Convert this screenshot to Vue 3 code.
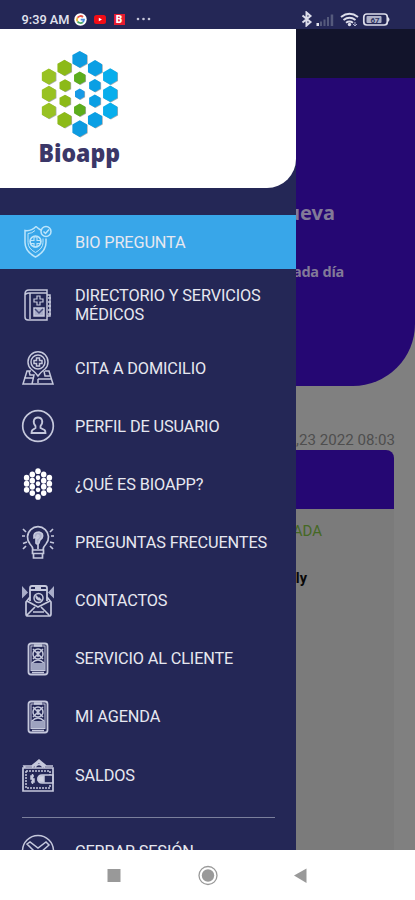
<script setup>
const hex = (x, y, r) => {
  const w = r * 0.87
  return `${x},${y - r} ${x + w},${y - r / 2} ${x + w},${y + r / 2} ${x},${y + r} ${x - w},${y + r / 2} ${x - w},${y - r / 2}`
}
const cells = [
  [11.8, 26.5, 8, '#98c222'], [11.8, 43.8, 8, '#98c222'], [11.8, 60.8, 8, '#98c222'],
  [27.4, 17.8, 8, '#8cba18'], [28, 35.5, 6.3, '#8cba18'], [28, 51, 6.3, '#8cba18'], [27.4, 70, 8, '#8cba18'],
  [42.7, 9.3, 8.4, '#0d9be0'], [42.7, 28, 6.5, '#5cad1c'], [42.7, 44, 5.4, '#1699e6'], [42.7, 60, 6.5, '#5cad1c'], [42.7, 78.6, 8.4, '#0d9be0'],
  [58, 18.2, 8.1, '#0a9fe4'], [57.8, 35.5, 6.5, '#0a9fe4'], [57.8, 51, 6.5, '#0a9fe4'], [58, 70, 8.1, '#0a9fe4'],
  [73.2, 26.5, 8.2, '#08aeec'], [73.2, 43.8, 8.2, '#08aeec'], [73.2, 60.8, 8.2, '#08aeec'],
]
const dots = [
  [6, 11], [6, 17], [6, 23], [12, 7.8], [12, 14], [12, 20], [12, 26.2],
  [18, 4.5], [18, 11], [18, 17], [18, 23], [18, 30],
  [24, 7.8], [24, 14], [24, 20], [24, 26.2], [30, 11], [30, 17], [30, 23],
]
const items = [
  { icon: 'shield', label: 'BIO PREGUNTA' },
  { icon: 'book', label: 'DIRECTORIO Y SERVICIOS MÉDICOS' },
  { icon: 'map', label: 'CITA A DOMICILIO' },
  { icon: 'user', label: 'PERFIL DE USUARIO' },
  { icon: 'dots', label: '¿QUÉ ES BIOAPP?' },
  { icon: 'bulb', label: 'PREGUNTAS FRECUENTES' },
  { icon: 'mail', label: 'CONTACTOS' },
  { icon: 'phone', label: 'SERVICIO AL CLIENTE' },
  { icon: 'phone', label: 'MI AGENDA' },
  { icon: 'wallet', label: 'SALDOS' },
]
</script>

<template>
  <div class="screen">
    <header class="status">
      <span class="clock">9:39 AM</span>
      <svg class="google" width="13" height="13" viewBox="0 0 13 13">
        <circle cx="6.5" cy="6.5" r="6.2" fill="#fff" />
        <g fill="none" stroke-width="1.8">
          <path d="M9 4A3.6 3.6 0 0 0 3.5 4.7" stroke="#e75546" />
          <path d="M3.5 4.7A3.6 3.6 0 0 0 3.5 8.4" stroke="#efbd38" />
          <path d="M3.5 8.4A3.6 3.6 0 0 0 8.8 9.2" stroke="#4aa865" />
          <path d="M8.8 9.2A3.6 3.6 0 0 0 10 6.6H6.7" stroke="#4789dc" />
        </g>
      </svg>
      <svg class="tube" width="12" height="9" viewBox="0 0 12 9"><rect width="12" height="9" rx="2.5" fill="#f20d16" /><path d="M4.8 2.7 8 4.5 4.8 6.3z" fill="#fff" /></svg>
      <span class="bee">B</span>
      <svg class="more" width="15" height="4" viewBox="0 0 15 4" fill="#c4c5d8"><circle cx="2" cy="2" r="1.3" /><circle cx="7.5" cy="2" r="1.3" /><circle cx="13" cy="2" r="1.3" /></svg>
      <svg class="signals" width="91" height="16" viewBox="0 0 91 16">
        <path d="M1.500 4.500 9.500 11 5.500 14.500V1.500l4 3.500L1.500 11.500" fill="none" stroke="#dcddea" stroke-width="2" />
        <g fill="#555a7c"><path d="M15.500 12h2.500v3h-2.500z" fill="#e5e6ee" /><path d="M19 10.500h2V15h-2zM22.500 8.500h2V15h-2zM26 6h2v9h-2zM29.700 3.500h2.500V15h-2.500z" /></g>
        <g fill="none" stroke="#dcddea" stroke-width="2"><path d="M40 6q8.500-6.500 17 0M42.500 9q6-4.500 12 0M45 11.800q3.500-2.500 7 0" /></g>
        <circle cx="48.500" cy="13.500" r="1.700" fill="#dcddea" /><path d="M54 11v4m-2-2 2 2 2-2" stroke="#aeb2ce" fill="none" />
        <rect x="62.800" y="3" width="23.500" height="11" rx="3" fill="none" stroke="#dcddea" stroke-width="1.700" />
        <rect x="65.500" y="5" width="15" height="7" rx="1" fill="#aeb1c8" /><path d="M87 6q3 2.500 0 5z" fill="#dcddea" />
        <text x="69.500" y="11.700" class="charge">67</text>
      </svg>
    </header>

    <main class="stage">
      <section class="page">
        <div class="topbar"></div>
        <div class="banner">
          <p class="headline">ueva</p>
          <p class="sub">ada día</p>
        </div>
        <p class="date">,23 2022 08:03</p>
        <article class="card">
          <div class="card-head"></div>
          <p class="state">ADA</p>
          <p class="name">ly</p>
        </article>
      </section>

      <aside class="drawer">
        <div class="brand">
          <svg width="90" height="120" viewBox="0 0 90 120">
            <g v-for="(c, i) in cells" :key="i">
              <polygon :points="hex(c[0] + 0.7, c[1] + 0.5, c[2])" fill="#a7abb0" />
              <polygon :points="hex(c[0], c[1], c[2])" :fill="c[3]" />
            </g>
            <text class="wordmark" x="1.500" y="111.500" textLength="81.500" lengthAdjust="spacingAndGlyphs">Bioapp</text>
          </svg>
        </div>
        <nav class="menu">
          <a v-for="(item, i) in items" :key="item.label" class="item" :class="{ active: i === 0, double: i === 1 }">
            <svg class="icon" width="36" height="36" viewBox="0 0 36 36">
              <g v-if="item.icon === 'shield'" transform="translate(-2 -.5)">
                <path d="M18 3q-5 5-11 4v12q0 9 10.500 14.500Q28 28 28 19v-4M18 3q3 3 6 4" /><path d="M17 7q-3 3-7 3v9q0 6 7.500 10Q25 25 25 19v-4" stroke-width="1" />
                <circle cx="17.500" cy="18" r="5.500" /><path d="M16 13.500h3V17h3.500v3H19v3.500h-3V20h-3.500v-3H16z" stroke-width="1.100" />
                <circle cx="28" cy="8" r="5" /><path d="m25.500 8 2 2 3.500-4" />
              </g>
              <g v-else-if="item.icon === 'book'" transform="translate(-1 0)">
                <path d="M6 7q0-4 4-4h18v30H9q-3 0-3-3zM6 8q1-2 4-2h18M11 6v26M28 8h3v21h-3M29 11h3m-3 4h3m-3 4h3m-3 4h3m-3 4h3" />
                <path d="M18 9h3v3h3v3h-3v3h-3v-3h-3v-3h3z" stroke-width="1.200" />
                <path d="M15 21h10v8H15z" fill="#a9adc9" /><path d="m16 22 4 4 4-4" stroke="#454a79" />
              </g>
              <g v-else-if="item.icon === 'map'">
                <path d="M18 26q-3-4-7-7a10 10 0 1 1 14 0q-4 3-7 7z" /><circle cx="18" cy="12" r="7" />
                <path d="M16.500 8h3v2.500H22v3h-2.500V16h-3v-2.500H14v-3h2.500z" />
                <path d="M11 21H7L3 34h30l-4-13h-4M9 21l1 4h4l-2 9M4 28h9m11-7 1 5h5m-12 3h14M18 29v4" />
              </g>
              <g v-else-if="item.icon === 'user'">
                <circle cx="18" cy="18" r="15.300" stroke-width="1.700" />
                <path d="M15.500 18q-2.500-3-1.500-6 1-2.500 4-2.500t4 2.500q1 3-1.500 6v2l4 2q1 1 1 3h-14q0-2 1-3l3-2z" stroke-width="1.800" />
              </g>
              <g v-else-if="item.icon === 'dots'" fill="#fff" stroke="none" transform="translate(.9 .6) scale(.95 1.010)">
                <circle v-for="(d, k) in dots" :key="k" :cx="d[0]" :cy="d[1]" :r="d[0] === 18 && d[1] > 5 && d[1] < 29 ? 2.400 : 2.900" />
              </g>
              <g v-else-if="item.icon === 'bulb'" stroke-width="1.700">
                <path d="M13 26q0-3-3-6a10.500 10.500 0 1 1 16 0q-3 3-3 6zM12.500 26h11v3.500h-11zm1 3.500h9V34h-9zM7 18l-4 1.500M6 8 3 5m3 17-3 3M30 18l4 1M30 8l3-3m-3 17 3 3M5 12H2m32 0h-3" />
                <path d="M14 14q-1-6 5-6 5 1 3 6-3 2-3 5-2 2-3 0v-4q3-1 3-3-2-2-2 1z" fill="#a9adc9" /><path d="M18 20v5" />
              </g>
              <g v-else-if="item.icon === 'mail'">
                <path d="M10 18V5q0-2 2-2h13q2 0 2 2v13M10 7h17M15 5h6" stroke-width="1.800" />
                <circle cx="18.500" cy="15" r="4.500" /><path d="M16 13q0 4 5 4l-2-2-1 1-1-2z" />
                <path d="m10 14-4 5v12q0 2 2 2h21q2 0 2-2V19l-4-5M7 18l11 6 12-6M7 32l8-8m14 8-8-8M13 29h11" stroke-width="1.700" />
                <path d="m2 3 6 6.500-6 6zm32 0-6 6.500 6 6z" fill="#a9adc9" stroke="none" />
              </g>
              <g v-else-if="item.icon === 'phone'">
                <rect x="8.500" y="2.500" width="19" height="31" rx="2.500" stroke-width="1.800" /><rect x="11" y="5" width="14" height="24.500" stroke-width="1" /><path d="M14 4.500h8" stroke-width="2.500" />
                <circle cx="18" cy="13" r="5" /><path d="m13 8 10 10m0-10L13 18M18 10v6m-6 6q6-6 12 0v6H12z" /><path d="M11.500 22h13v7h-13z" fill="#9da2bf" stroke="none" /><path d="M12 31.500h12" />
              </g>
              <g v-else>
                <path d="M3 11h30v23H3zM5 11l-1-2h8l7-6 7 6h7M12 10l7-5 6 5M15 10q4-5 8 0" stroke-width="1.700" />
                <path d="M6 14h24v4M6 14v17h24v-4" stroke-dasharray="2 1" />
                <path d="M14 19h-3v3h3v3h-3m1.500-8v10" />
                <path d="M33 18H22q-4 0-4 4t4 4h11z" /><path d="M24 19h-3q-3 0-3 3t3 3h3z" fill="#d0d2e2" />
              </g>
            </svg>
            <span>{{ item.label }}</span>
          </a>
          <hr class="rule" />
          <a class="item exit">
            <svg class="icon" width="36" height="36" viewBox="0 0 36 36"><circle cx="18" cy="18" r="15.500" /><path d="m7 11 3-2 8 6 8-6 3 3-9 8 8 8-3 3-7-8-7 8-3-3 8-8z" /></svg>
            <span>CERRAR SESIÓN</span>
          </a>
        </nav>
      </aside>
    </main>

    <footer class="keys">
      <svg width="415" height="50" viewBox="0 0 415 50">
        <rect x="107.500" y="19" width="13" height="13" fill="#999" />
        <circle cx="208" cy="25.500" r="9" fill="none" stroke="#999" stroke-width="1.300" /><circle cx="208" cy="25.500" r="6.200" fill="#999" />
        <path d="M294 25.500 306.500 18.500v14.500z" fill="#999" />
      </svg>
    </footer>
  </div>
</template>

<style>
body { margin: 0; }
</style>
<style scoped>
.screen { width: 415px; height: 900px; display: flex; flex-direction: column; overflow: hidden; background: #fff; font-family: Roboto, sans-serif; }
p { margin: 0; }
svg { display: block; flex: none; }
.status { height: 29px; flex: none; box-sizing: border-box; padding: 9px 0 0 21.5px; display: flex; align-items: center; background: #242756; color: #e2e3ef; }
.clock { width: 52px; font-size: 12.8px; line-height: 19px; font-weight: 500; letter-spacing: 0; white-space: nowrap; }
.google { margin-right: 7px; }
.tube { margin-right: 8px; }
.bee { width: 11px; height: 11px; background: #e51c30; color: #fff; font-size: 10px; line-height: 11px; font-weight: 900; text-align: center; }
.more { margin: 0 150px 0 11px; }
.charge { font-size: 8px; font-weight: 700; fill: #303461; }
.stage { height: 821px; flex: none; display: grid; grid-template-columns: 415px; grid-template-rows: 821px; overflow: hidden; }
.page, .drawer { grid-area: 1 / 1; }
.page { background: #808080; }
.topbar { height: 49px; background: #12142b; }
.banner { height: 308px; box-sizing: border-box; padding-top: 122px; border-bottom-right-radius: 62px; background: #250773; color: #827a98; font-family: "Noto Sans", sans-serif; font-weight: 700; }
.headline { width: 335px; text-align: right; font-size: 20px; line-height: 26px; }
.sub { width: 344px; margin-top: 34px; text-align: right; font-size: 14.5px; line-height: 22px; letter-spacing: -0.2px; }
.date { width: 395px; margin-top: 44px; text-align: right; font-size: 15.1px; line-height: 20px; color: #4e4e4e; }
.card { width: 394px; height: 450px; background: #7b7b7b; border-top-right-radius: 8px; overflow: hidden; }
.card-head { height: 59px; background: #250773; }
.state { width: 322px; margin-top: 12px; text-align: right; font-size: 15px; line-height: 20px; color: #456824; }
.name { width: 307px; margin-top: 28px; text-align: right; font-size: 14.5px; line-height: 20px; font-weight: 700; color: #080808; }
.drawer { width: 296px; height: 821px; background: #242756; overflow: hidden; z-index: 1; }
.brand { height: 159px; box-sizing: border-box; padding: 21px 0 0 37px; background: #fff; border-bottom-right-radius: 29px; }
.wordmark { font-family: "Open Sans", sans-serif; font-weight: 800; font-size: 25px; fill: #3b3768; }
.menu { padding-top: 27px; }
.item { height: 58.15px; box-sizing: border-box; padding: 0 20px 0 19.5px; display: flex; align-items: center; gap: 19.5px; color: #e7e8f0; font-size: 16.3px; line-height: 19px; letter-spacing: -0.13px; }
.item.active { height: 54px; background: #38a6e9; margin-bottom: 2px; }
.item.double { height: 68px; }
.icon { fill: none; stroke: #c5c8dc; stroke-width: 1.5; }
.active .icon { stroke: #bde5fb; }
.rule { width: 253px; height: 1.5px; margin: 12.5px 0 4px 22px; border: 0; background: #7b7f9c; }
.keys { height: 50px; flex: none; background: #fff; }
</style>
